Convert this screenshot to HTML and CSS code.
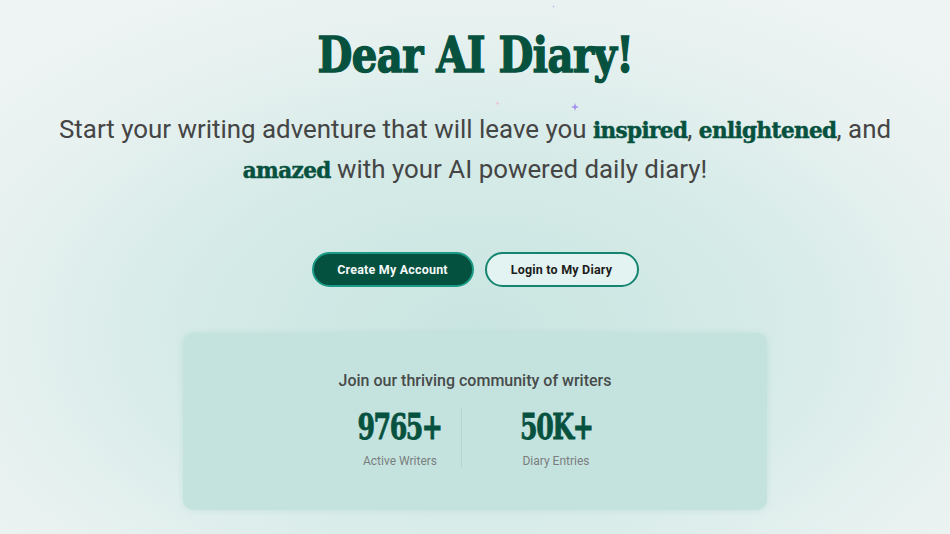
FILE: index.html
```html
<!DOCTYPE html>
<html>
<head>
<meta charset="utf-8">
<link rel="stylesheet" href="styles.css">
</head>
<body>
<main class="hero">
  <span class="spark spark-a"></span>
  <span class="spark spark-b"></span>
  <span class="spark spark-c"></span>
  <h1 class="title">Dear AI Diary!</h1>
  <p class="lead">Start your writing adventure that will leave you <b>inspired</b>, <b>enlightened</b>, and <b>amazed</b> with your AI powered daily diary!</p>
  <div class="actions">
    <a class="btn btn-primary">Create My Account</a>
    <a class="btn btn-secondary">Login to My Diary</a>
  </div>
  <section class="card">
    <h2 class="card-title">Join our thriving community of writers</h2>
    <div class="stats">
      <div class="stat stat-left">
        <div class="stat-num">9765+</div>
        <div class="stat-label">Active Writers</div>
      </div>
      <div class="divider"></div>
      <div class="stat stat-right">
        <div class="stat-num">50K+</div>
        <div class="stat-label">Diary Entries</div>
      </div>
    </div>
  </section>
</main>
</body>
</html>
```
FILE: styles.css
```css
* { box-sizing: border-box; }
html, body { margin: 0; height: 100%; }
body {
  font-family: Roboto, "Liberation Sans", sans-serif;
  background: radial-gradient(ellipse 70% 75% at 50% 62%, #c9e5e1 0%, #d6ebe8 45%, #e9f2f1 80%, #eef4f3 100%);
  overflow: hidden;
}
.hero {
  position: relative;
  width: 950px;
  height: 534px;
  display: flex;
  flex-direction: column;
  align-items: center;
  padding-top: 24px;
}
.title {
  margin: 0;
  font-family: "DejaVu Serif Condensed", "DejaVu Serif", serif;
  font-stretch: condensed;
  font-weight: 700;
  font-size: 49px;
  line-height: 62px;
  color: #07513f;
  letter-spacing: -0.6px;
  -webkit-text-stroke: 1.4px #07513f;
  transform: scaleX(0.91);
}
.lead {
  margin: 24px 0 0;
  width: 880px;
  text-align: center;
  font-size: 25.9px;
  line-height: 38px;
  color: #454545;
}
.lead b {
  font-family: "DejaVu Serif", serif;
  font-weight: 700;
  font-size: 21.5px;
  color: #07513f;
  letter-spacing: -0.6px;
  -webkit-text-stroke: 0.5px #07513f;
}
.actions {
  display: flex;
  gap: 11px;
  margin-top: 62px;
}
.btn {
  display: flex;
  align-items: center;
  justify-content: center;
  height: 35px;
  border-radius: 18px;
  font-size: 12.5px;
  font-weight: 700;
  letter-spacing: 0.2px;
  border: 2px solid #1d9a85;
}
.btn-primary {
  width: 162px;
  background: #04513f;
  color: #f4f8f7;
}
.btn-secondary {
  width: 154px;
  background: #e3f3f1;
  color: #1d1d1d;
  border-color: #168570;
}
.card {
  margin-top: 46px;
  width: 584px;
  height: 177px;
  border-radius: 10px;
  background: #c4e3df;
  box-shadow: 0 0 6px rgba(160, 205, 199, 0.35);
  display: flex;
  flex-direction: column;
  align-items: center;
  padding-top: 38px;
}
.card-title {
  margin: 0;
  font-size: 16px;
  font-weight: 500;
  color: #474b4a;
  line-height: 20px;
}
.stats {
  display: flex;
  align-items: flex-start;
  margin-top: 13px;
  margin-left: 39px;
}
.stat {
  display: flex;
  flex-direction: column;
  align-items: center;
}
.stat-left { width: 122px; }
.stat-right { width: 188px; }
.stat-num {
  font-family: "DejaVu Serif Condensed", "DejaVu Serif", serif;
  font-stretch: condensed;
  font-weight: 700;
  font-size: 35px;
  line-height: 46px;
  color: #07513f;
  letter-spacing: -1.8px;
  -webkit-text-stroke: 0.8px #07513f;
  transform: scaleX(0.8);
}
.stat-label {
  margin-top: 4px;
  font-size: 12px;
  color: #7a7e7d;
}
.divider {
  width: 1px;
  margin-top: 4px;
  background: #b2d6d1;
  height: 60px;
}
.spark {
  position: absolute;
  width: 8px;
  height: 8px;
  background: #a38cf0;
  clip-path: polygon(50% 0, 62% 38%, 100% 50%, 62% 62%, 50% 100%, 38% 62%, 0 50%, 38% 38%);
}
.spark-a { left: 571px; top: 103px; }
.spark-b { left: 495px; top: 101px; width: 5px; height: 5px; background: #f1bfd6; }
.spark-c { left: 552px; top: 5px; width: 3px; height: 3px; background: #b7a7ee; }
```
